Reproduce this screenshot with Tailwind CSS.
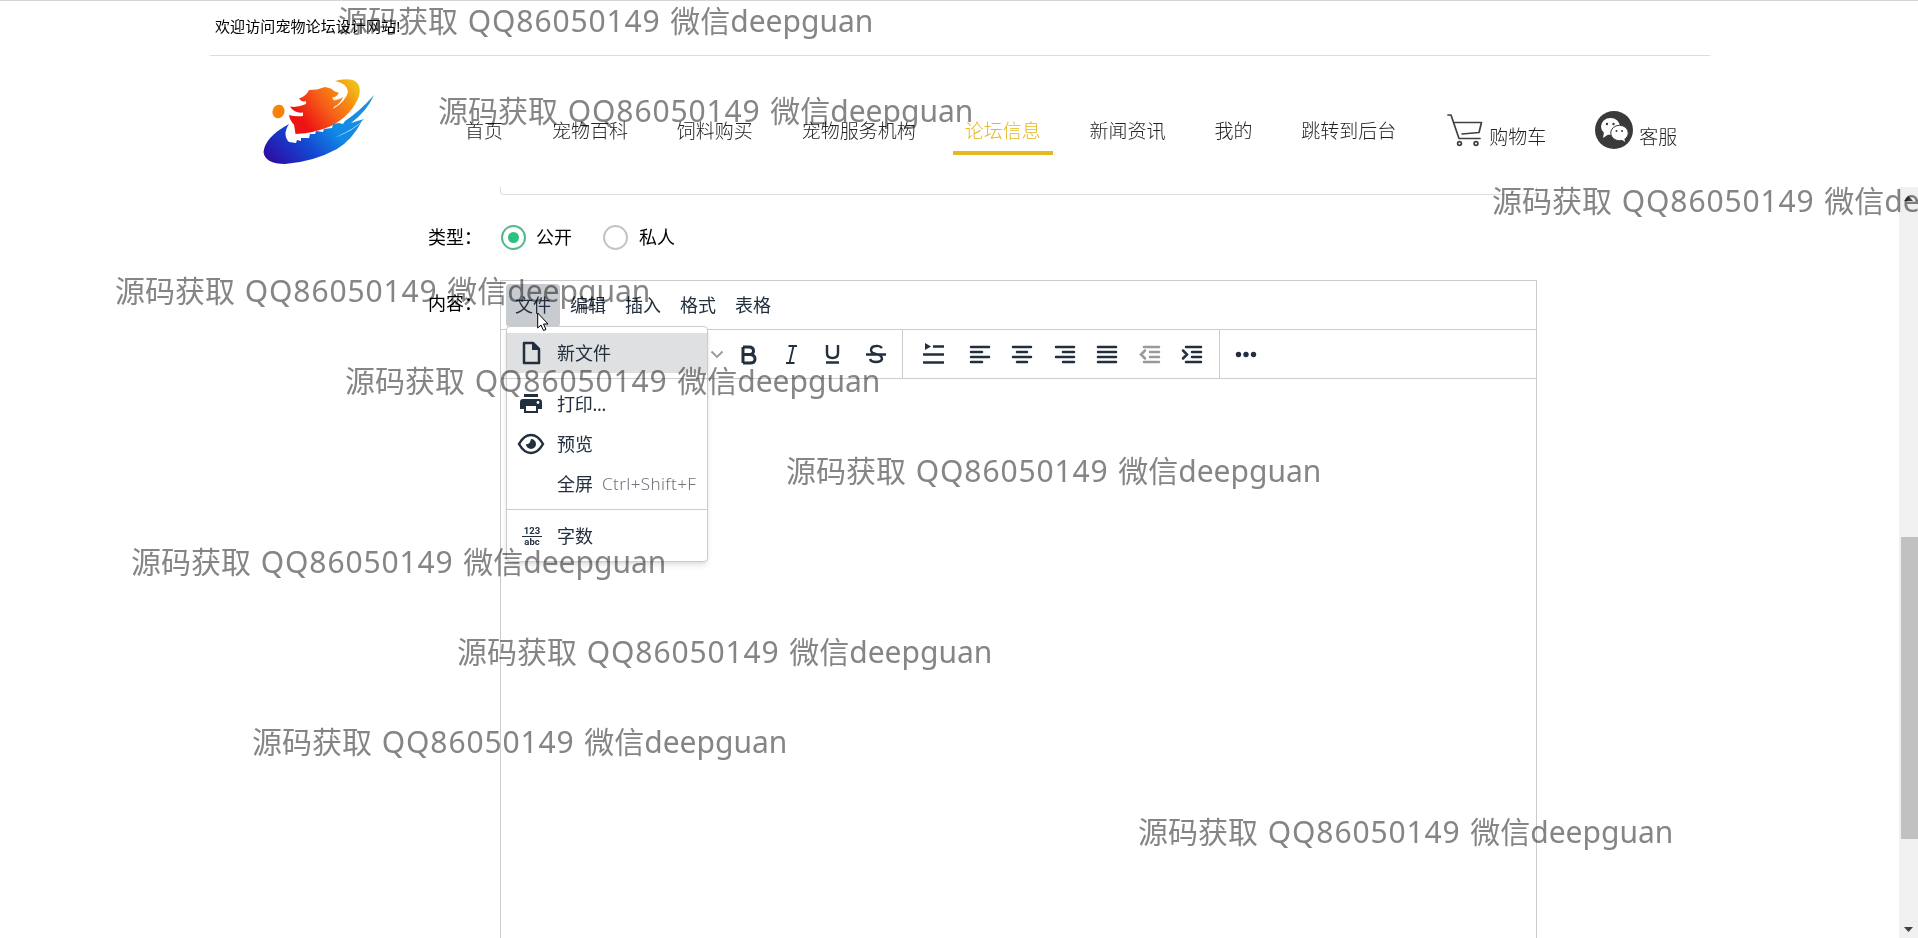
<!DOCTYPE html>
<html lang="zh">
<head>
<meta charset="utf-8">
<title>宠物论坛</title>
<script src="https://cdn.jsdelivr.net/npm/@tailwindcss/browser@4"></script>
</head>
<body class="relative flex h-[938px] w-[1918px] flex-col overflow-hidden bg-white font-['Noto_Sans','Noto_Sans_CJK_SC',sans-serif] text-black">

<!-- welcome bar and navigation -->
<header class="h-[187px] shrink-0 border-t border-[#d4d4d4] px-[210px]">
  <div class="flex h-[55px] w-[1500px] items-center border-b border-[#ddd] pb-1 pl-[5px] text-[15px] leading-none tracking-[0.1px]"><span>欢迎访问宠物论坛设计网站!</span></div>
  <div class="flex h-[131px] w-[1500px] items-start">
    <svg class="ml-[45px] mt-[14px] h-[100px] w-[130px] shrink-0" viewBox="0 0 130 100">
      <defs>
        <linearGradient id="blue" x1="0" y1="0.8" x2="1" y2="0.2"><stop offset="0" stop-color="#2a12a8"/><stop offset=".3" stop-color="#1444d0"/><stop offset=".6" stop-color="#118ae6"/><stop offset="1" stop-color="#1a90e0"/></linearGradient>
        <linearGradient id="fire" gradientUnits="userSpaceOnUse" x1="48" y1="52" x2="98" y2="14"><stop offset="0" stop-color="#ee1212"/><stop offset=".45" stop-color="#f6601a"/><stop offset=".75" stop-color="#f98a10"/><stop offset="1" stop-color="#f0bc18"/></linearGradient>
      </defs>
      <ellipse cx="23.500" cy="41.500" rx="6" ry="6.800" fill="#f98208" transform="rotate(20 23.500 41.500)"/>
      <path fill="url(#fire)" d="M40.500 64 39 54.500Q35 51 34 45Q40 47 48 46V42.500Q39 43.500 35 36.500Q42 38 51 34V31Q47 33 44 28.500Q51 26.500 54 20L62 19.500 70 17 76 18.500Q79 22 84 23Q81 27.500 77 27.500L79 30.500Q84 30 88 27Q86 33 79 37L78 39Q91 31 93 22 92 13 80 11 89 8 98 10 107 14 104 26 97 45 76 56 60 63 40.500 64Z"/>
      <path fill="url(#blue)" d="M34 54Q10 67 8.500 82 10 94 30 94 58 92 82 79 97 70 107 51 100 60 79 68 100 59 109 49L96 53Q112 41 119 25 105 41 90 51L88 54 84 53 78 54 77 58 69 59 68 62 61 61 60 64 55 64 54 68 46 68 46 71 42 70 41 73 34 72Q27 65 34 54Z"/>
    </svg>
    <nav class="ml-[68px] mt-[57px] flex h-[50px] items-start gap-[24.9px] text-[19px] leading-[37px] font-light whitespace-nowrap text-[#222]">
      <a class="px-3">首页</a><a class="px-3">宠物百科</a><a class="px-3">饲料购买</a><a class="px-3">宠物服务机构</a>
      <a class="h-[42px] border-b-4 border-[#e6b822] px-3 text-[#e6b822]">论坛信息</a>
      <a class="px-3">新闻资讯</a><a class="px-3">我的</a><a class="px-3">跳转到后台</a>
      <a class="ml-[2px] flex gap-[6px] pl-3">
        <svg class="mt-[1px] h-[34px] w-[36px]" viewBox="0 0 36 34" fill="none" stroke="#404040" stroke-width="1.7" stroke-linejoin="round" stroke-linecap="round"><path d="M1 1H4L12 24.500H33M6.500 8.500H34.500L32 18.500 15 20"/><circle cx="12.500" cy="29.500" r="1.900"/><circle cx="29" cy="29.500" r="1.900"/></svg>
        <span class="mt-[6px]">购物车</span></a>
      <a class="ml-[24px] flex gap-[6px]">
        <svg class="h-[38px] w-[38px] -mt-[2px]" viewBox="0 0 38 38"><circle cx="19" cy="19" r="19" fill="#3a3a3a"/><ellipse cx="15.500" cy="15.500" rx="9.500" ry="8.500" fill="#fff"/><path d="M9 21 8 27 14 23Z" fill="#fff"/><ellipse cx="24.500" cy="22" rx="8.800" ry="7.700" fill="#fff" stroke="#3a3a3a"/><path d="m26 28 4 3-1-5Z" fill="#fff"/><g fill="#3a3a3a"><circle cx="12" cy="13" r="1.200"/><circle cx="18.500" cy="13" r="1.200"/><circle cx="21.500" cy="20" r="1"/><circle cx="27" cy="20" r="1"/></g></svg>
        <span class="mt-[6px]">客服</span></a>
    </nav>
  </div>
</header>

<main class="flex min-h-0 flex-1 justify-between">
  <form class="ml-[428px] flex w-[1109px] flex-col text-[18px]">
    <div class="ml-[72px] h-2 shrink-0 rounded-b border border-t-0 border-[#ddd]"></div>
    <div class="mt-[29px] flex h-[26px] shrink-0 items-center leading-none">
      <span class="w-[73px]">类型：</span>
      <span class="grid h-[25px] w-[25px] place-items-center rounded-full border-2 border-[#52b98a]"><span class="h-[11px] w-[11px] rounded-full bg-[#2bc27d]"></span></span>
      <span class="ml-[10px]">公开</span>
      <span class="ml-[31px] h-[25px] w-[25px] rounded-full border-2 border-[#c4c4c4]"></span>
      <span class="ml-[11px]">私人</span>
    </div>
    <div class="mt-[30px] flex min-h-0 flex-1">
      <span class="w-[72px] shrink-0 pt-[14px] leading-none">内容：</span>
      <section class="relative flex-1 border border-b-0 border-[#ccc] text-[#222f3e]">
        <div class="flex h-[49px] gap-[1px] border-b border-[#ccc] px-[5px] py-[3px] leading-[43px]">
          <span class="h-[43px] rounded bg-[#c8cbcf] px-[9px]">文件</span><span class="px-[9px]">编辑</span><span class="px-[9px]">插入</span><span class="px-[9px]">格式</span><span class="px-[9px]">表格</span>
        </div>
        <div class="flex h-[49px] items-center border-b border-[#ccc]">
          <svg class="ml-[206px] h-[48px] w-[700px]" viewBox="0 0 700 48" fill="none" stroke="#222f3e">
            <path d="m4.500 21.500 5.500 5.500 5.500-5.500" stroke="#999" stroke-width="1.800"/>
            <path d="M36 17V33M36 17H42Q46.500 17 46.500 21 46.500 24.500 42 24.500H36H43Q48 25 48 29 48 33 43 33H36" stroke-width="3"/>
            <path d="M81.500 16H90M79 33H87.500M86.500 16 82.500 33" stroke-width="1.800"/>
            <path d="M120 15V23Q120 28 125.500 28T131 23V15M119 32.500H132" stroke-width="2.400"/>
            <path d="M175 18Q173 15.500 169 16 164 16.500 164 20 164 23 169 24 175 25 175 29 174 32 169 32 164 32 163 29M159 24.500H179" stroke-width="2.400"/>
            <path d="M195.500 0V48M512.500 0V48" stroke="#ccc"/>
            <path d="M226 16.500H237M216 24.500H237M216 32.500H237" stroke-width="2.600"/><path d="m218 13 6 3.500-6 3.500Z" fill="#222f3e" stroke="none"/>
            <g stroke-width="2.500" stroke-linecap="round">
            <path d="M264 17H282M264 22H275M264 27H282M264 32H275"/>
            <path d="M306 17H324M310 22H320M306 27H324M310 32H320"/>
            <path d="M349 17H367M356 22H367M349 27H367M356 32H367"/>
            <path d="M391 17H409M391 22H409M391 27H409M391 32H409"/>
            <path stroke="#999" d="M437 17H452M443 22H452M443 27H452M437 32H452M438 20.500 434 24.500 438 28.500"/>
            <path d="M479 17H494M485 22H494M485 27H494M479 32H494M476 20.500 480 24.500 476 28.500"/>
            </g>
            <g fill="#222f3e" stroke="none"><circle cx="531.500" cy="24.500" r="2.700"/><circle cx="539" cy="24.500" r="2.700"/><circle cx="546.500" cy="24.500" r="2.700"/></g>
          </svg>
        </div>
        <!-- file menu -->
        <div class="absolute left-[5px] top-[45px] flex h-[236px] w-[202px] flex-col rounded border border-[#ccc] bg-white leading-[40px] shadow-md">
          <div class="mt-[6px] flex h-[40px] items-center bg-[#dee0e2]">
            <svg class="ml-3 h-6 w-6" viewBox="0 0 24 24" fill="none" stroke="#222f3e" stroke-width="2.500" stroke-linejoin="round"><path d="M5 2H14L20 8V22H5Z"/><path d="M13 1V9H21Z" fill="#222f3e" stroke="none"/></svg>
            <span class="ml-[14px]">新文件</span></div>
          <div class="mt-[5px] mb-[5px] border-t border-[#ccc]"></div>
          <div class="flex h-[40px] items-center">
            <svg class="ml-3 h-6 w-6" viewBox="0 0 24 24" fill="#222f3e"><path d="M5 2H19V5H5ZM4 7H20Q23 7 23 10V17H19V21H5V17H1V10Q1 7 4 7ZM7 14V19H17V14Z" fill-rule="evenodd"/><circle cx="19" cy="10.500" r="1.400" fill="#fff"/></svg>
            <span class="ml-[14px] tracking-[-0.3px]">打印...</span></div>
          <div class="flex h-[40px] items-center">
            <svg class="ml-[10px] h-7 w-7" viewBox="0 0 28 28" fill="none" stroke="#222f3e" stroke-width="2.500"><path d="M2 14Q7 5 14 5T26 14Q21 23 14 23T2 14Z"/><path d="M14 9A5 5 0 1 1 9 14Q13 15 14 9Z" fill="#222f3e" stroke="none"/></svg>
            <span class="ml-[12px]">预览</span></div>
          <div class="flex h-[40px] items-center pl-[50px]">全屏<span class="ml-[9px] text-[17px] font-light whitespace-nowrap tracking-[0.4px] text-[#6f757c]">Ctrl+Shift+F</span></div>
          <div class="mt-[5px] mb-[6px] border-t border-[#ccc]"></div>
          <div class="flex h-[40px] items-center">
            <div class="ml-[15px] flex w-[20px] flex-col items-center font-['Roboto'] text-[9.500px] leading-[9px] font-bold"><span>123</span><span class="mt-px w-full border-t-[1.500px] border-[#222f3e]"></span><span>abc</span></div>
            <span class="ml-[15px]">字数</span></div>
        </div>
      </section>
    </div>
  </form>
  <!-- page scrollbar -->
  <aside class="flex w-[19px] flex-col items-center justify-between bg-[#f0f0f0] pt-[9px] pb-[6px]">
    <svg class="h-[5px] w-[9px]" viewBox="0 0 9 5"><path d="M0 5 4.500 0 9 5Z" fill="#404040"/></svg>
    <div class="mt-[336px] mb-auto ml-[2px] h-[302px] w-[17px] bg-[#c1c1c1]"></div>
    <svg class="h-[5px] w-[9px]" viewBox="0 0 9 5"><path d="M0 0 4.500 5 9 0Z" fill="#404040"/></svg>
  </aside>
</main>

<svg class="absolute left-[537px] top-[312px] h-[20px] w-[13px]" viewBox="0 0 13 20"><path d="M.7 1V16L4 13 6.500 18.500 9 17.500 6.500 12H11Z" fill="#fff" stroke="#000"/></svg>

<!-- watermark rows -->
<div class="pointer-events-none absolute inset-0 flex flex-col overflow-hidden font-['Noto_Sans','Noto_Sans_CJK_SC',sans-serif] text-[30px] leading-[90px] whitespace-pre text-[#858585] mix-blend-multiply [word-spacing:2px]">
  <div class="-mt-[24px] ml-[338px] h-[90.1px] shrink-0">源码获取 <span class="tracking-[0.85px]">QQ86050149</span> 微信deepguan</div>
  <div class="ml-[438px] h-[90.1px] shrink-0">源码获取 <span class="tracking-[0.85px]">QQ86050149</span> 微信deepguan</div>
  <div class="ml-[1492px] h-[90.1px] shrink-0">源码获取 <span class="tracking-[0.85px]">QQ86050149</span> 微信deepguan</div>
  <div class="ml-[115px] h-[90.1px] shrink-0">源码获取 <span class="tracking-[0.85px]">QQ86050149</span> 微信deepguan</div>
  <div class="ml-[345px] h-[90.1px] shrink-0">源码获取 <span class="tracking-[0.85px]">QQ86050149</span> 微信deepguan</div>
  <div class="ml-[786px] h-[90.1px] shrink-0">源码获取 <span class="tracking-[0.85px]">QQ86050149</span> 微信deepguan</div>
  <div class="ml-[131px] h-[90.1px] shrink-0">源码获取 <span class="tracking-[0.85px]">QQ86050149</span> 微信deepguan</div>
  <div class="ml-[457px] h-[90.1px] shrink-0">源码获取 <span class="tracking-[0.85px]">QQ86050149</span> 微信deepguan</div>
  <div class="ml-[252px] h-[90.1px] shrink-0">源码获取 <span class="tracking-[0.85px]">QQ86050149</span> 微信deepguan</div>
  <div class="ml-[1138px] h-[90.1px] shrink-0">源码获取 <span class="tracking-[0.85px]">QQ86050149</span> 微信deepguan</div>
</div>
</body>
</html>
